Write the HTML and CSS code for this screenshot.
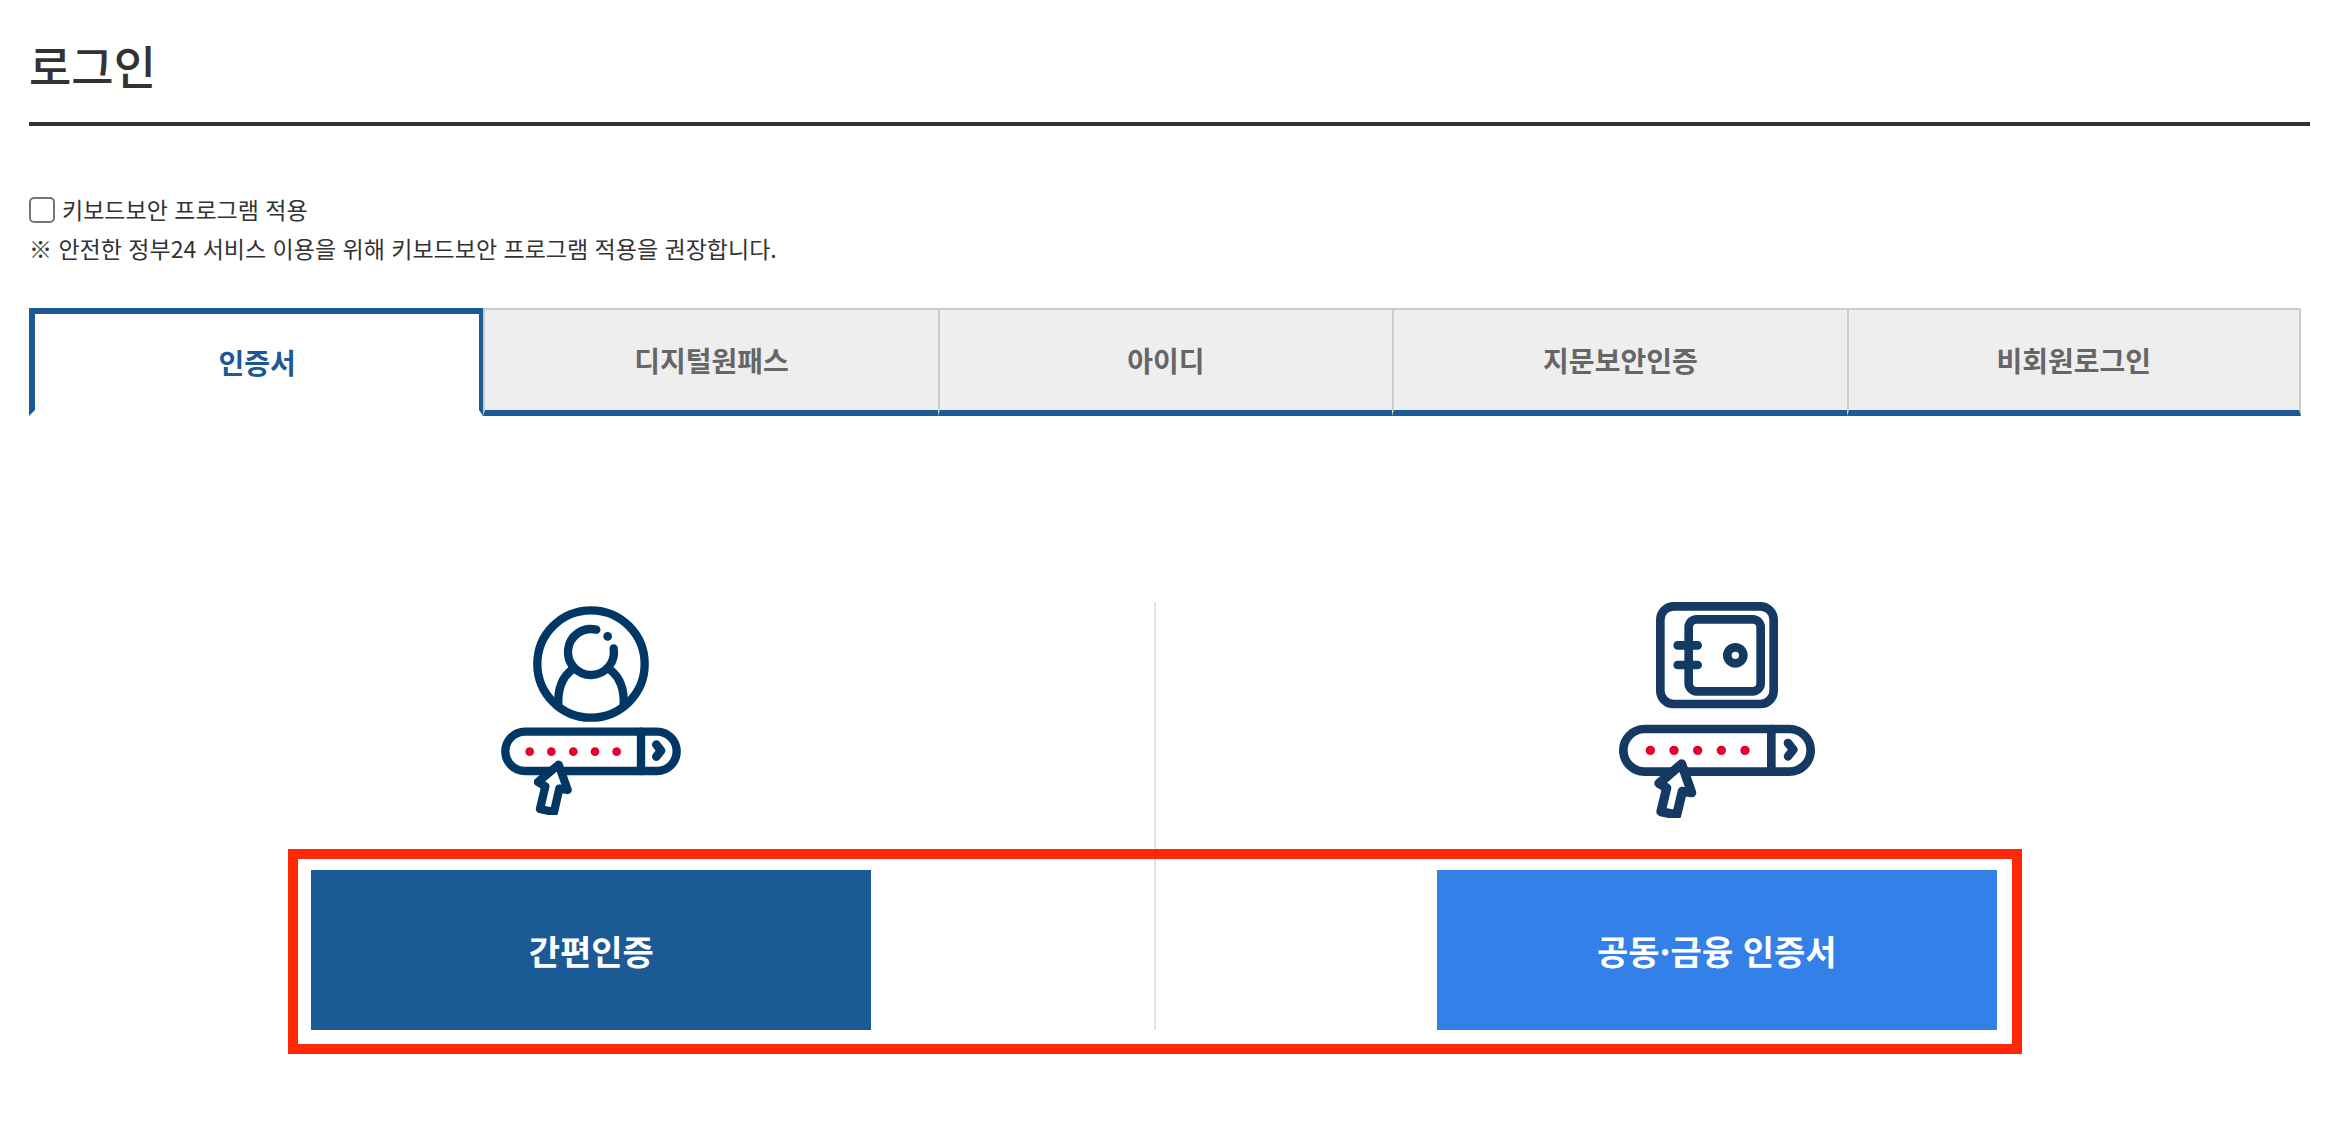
FILE: index.html
```html
<!DOCTYPE html>
<html lang="ko">
<head>
  <meta charset="utf-8">
  <title>로그인</title>
  <link rel="stylesheet" href="styles.css">
</head>
<body>

  <main class="container">
    <h1 class="title">로그인</h1>

    <div class="security">
      <div class="check">
        <input type="checkbox" id="keyboard">
        <label for="keyboard">키보드보안 프로그램 적용</label>
      </div>
      <p>※ 안전한 정부24 서비스 이용을 위해 키보드보안 프로그램 적용을 권장합니다.</p>
    </div>

    <!-- Tabs -->
    <nav class="tabs">
      <a href="#cert" class="tab on">인증서</a>
      <a href="#onepass" class="tab">디지털원패스</a>
      <a href="#id" class="tab">아이디</a>
      <a href="#finger" class="tab">지문보안인증</a>
      <a href="#guest" class="tab">비회원로그인</a>
    </nav>

    <!-- Login methods -->
    <section class="panel" id="cert">
      <div class="method">
        <div class="icon">
          <svg class="icon-simple" viewBox="57 42 540 630" fill="none" stroke="#003764" stroke-width="25" stroke-linecap="round" stroke-linejoin="round" aria-hidden="true">
            <circle cx="327" cy="219" r="161"/>
            <path d="M343 116A69 69 0 1 0 395 172"/>
            <circle cx="377" cy="136" r="13" fill="#003764" stroke="none"/>
            <path d="M271 235C240 258 226 292 229 345M383 235C414 258 428 292 425 345"/>
            <rect x="70" y="422" width="514" height="118" rx="59"/>
            <path d="M477 422V540"/>
            <path d="M523 461L537 479L523 497" stroke-width="26"/>
            <g fill="#e6002d" stroke="none">
              <circle cx="143" cy="482" r="13"/>
              <circle cx="208" cy="482" r="13"/>
              <circle cx="274" cy="482" r="13"/>
              <circle cx="339" cy="482" r="13"/>
              <circle cx="404" cy="482" r="13"/>
            </g>
            <path d="M230 521L168 573L190 586L174 654L216 663L232 593L257 597Z" fill="#fff"/>
          </svg>
        </div>
        <button type="button" class="btn">간편인증</button>
      </div>

      <div class="method">
        <div class="icon">
          <svg class="icon-cert" viewBox="54 36 588 648" fill="none" stroke="#143a63" stroke-width="26" stroke-linecap="round" stroke-linejoin="round" aria-hidden="true">
            <rect x="178" y="49" width="340" height="293" rx="40"/>
            <rect x="263" y="88" width="216" height="216" rx="24"/>
            <path d="M230 166H290M230 225H290"/>
            <circle cx="403" cy="196" r="24"/>
            <rect x="67" y="417" width="562" height="128" rx="64"/>
            <path d="M511 417V545"/>
            <path d="M561 459L577 479L561 499"/>
            <g fill="#e6002d" stroke="none">
              <circle cx="148" cy="481" r="14"/>
              <circle cx="219" cy="481" r="14"/>
              <circle cx="290" cy="481" r="14"/>
              <circle cx="361" cy="481" r="14"/>
              <circle cx="432" cy="481" r="14"/>
            </g>
            <path d="M242 522L174 580L197 594L180 665L227 675L244 604L272 608Z" fill="#fff" stroke-width="28"/>
          </svg>
        </div>
        <button type="button" class="btn blue">공동·금융 인증서</button>
      </div>

      <div class="highlight"></div>
    </section>
  </main>

</body>
</html>
```

FILE: styles.css
```css
* {
  box-sizing: border-box;
}

body {
  margin: 0;
  background: #fff;
  color: #333;
  font-family: "Noto Sans CJK KR", "Noto Sans", sans-serif;
}

.container {
  padding: 30px 32px 74px 29px;
}

.title {
  margin: 0;
  padding-bottom: 24px;
  border-bottom: 4px solid #333;
  font-size: 46px;
  font-weight: 500;
  line-height: 68px;
}

.security {
  margin-top: 64px;
  font-size: 23px;
  line-height: 39px;
}

.security p {
  margin: 0;
}

.check {
  display: flex;
  align-items: center;
  gap: 7px;
}

.check input {
  appearance: none;
  width: 26px;
  height: 26px;
  margin: 0;
  border: 2px solid #767676;
  border-radius: 5px;
  background: #fff;
}

.check input:checked {
  background: #1c5a96;
}

.tabs {
  display: grid;
  grid-template-columns: repeat(5, 1fr);
  margin: 40px 9px 0 0;
}

.tab {
  height: 108px;
  border: 2px solid #ccc;
  border-right: 0;
  border-bottom: 6px solid #1c5a96;
  background: #eee;
  color: #666;
  font-size: 28px;
  font-weight: bold;
  line-height: 100px;
  text-align: center;
  text-decoration: none;
}

.tab:last-child {
  border-right: 2px solid #ccc;
}

.tab.on {
  border: 6px solid #1c5a96;
  border-right-width: 4px;
  border-bottom-color: #fff;
  background: #fff;
  color: #1c5a96;
  line-height: 96px;
}

.panel {
  position: relative;
  display: grid;
  grid-template-columns: 1fr 1fr;
  margin: 186px 32px 0 0;
}

.method {
  display: flex;
  flex-direction: column;
  align-items: center;
  gap: 52px;
}

.method + .method {
  border-left: 2px solid #e1e1e1;
}

.icon {
  display: flex;
  align-items: center;
  height: 216px;
}

.icon-simple {
  width: 180px;
  height: 210px;
}

.icon-cert {
  width: 196px;
  height: 216px;
}

.btn {
  width: 560px;
  height: 160px;
  border: 0;
  background: #1c5a96;
  color: #fff;
  font-family: inherit;
  font-size: 34px;
  font-weight: bold;
  cursor: pointer;
}

.btn.blue {
  background: #3480e9;
}

/* red frame round both buttons */
.highlight {
  position: absolute;
  top: 247px;
  bottom: -24px;
  left: calc(25% - 303px);
  right: calc(25% - 306px);
  border: 10px solid #ff2803;
  pointer-events: none;
}
```
